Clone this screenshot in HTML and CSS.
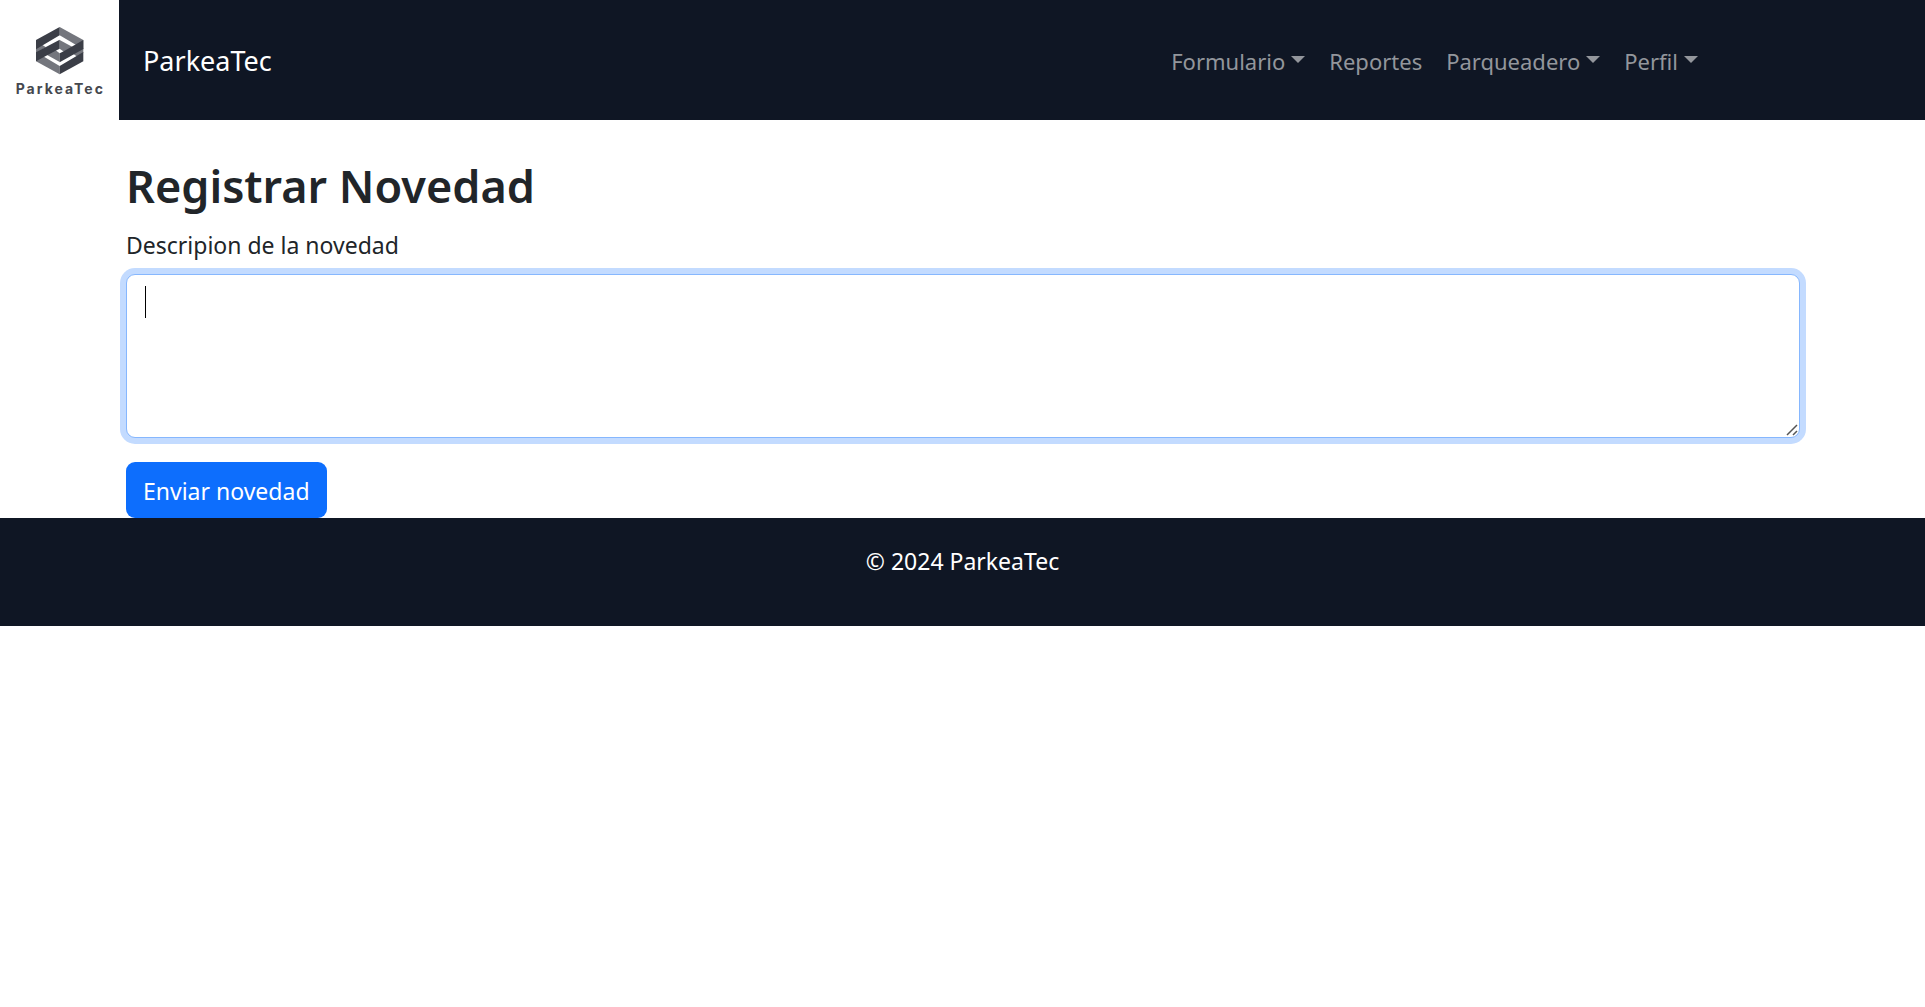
FILE: index.html
```html
<!DOCTYPE html>
<html lang="es">
<head>
<meta charset="utf-8">
<meta name="viewport" content="width=device-width, initial-scale=1">
<title>ParkeaTec</title>
<link rel="stylesheet" href="styles.css">
</head>
<body>
<header class="navbar">
  <svg class="logo" viewBox="0 0 357 360" role="img" aria-label="ParkeaTec">
    <g fill="#74767d">
      <path d="M179 81L250 120V148L179 106Z"/>
      <path d="M179 223L108 184V156L179 198Z"/>
      <path d="M179 120L222 143L196 158L179 146Z"/>
      <path d="M179 186L136 162L162 147L179 160Z"/>
      <path d="M108 145L126 134L138 142L108 160Z"/>
      <path d="M250 159L232 170L220 162L250 144Z"/>
    </g>
    <g fill="#3b3e47">
      <path d="M108 120L179 81V106L108 148Z"/>
      <path d="M250 184L179 223V198L250 156Z"/>
      <path d="M250 120V147L179 187V160L194 152Z"/>
      <path d="M108 184V157L179 119V146L164 154Z"/>
    </g>
    <text class="logo-text" x="181" y="282" text-anchor="middle">ParkeaTec</text>
  </svg>
  <a class="brand" href="#">ParkeaTec</a>
  <nav class="links">
    <a class="link dropdown" href="#">Formulario</a>
    <a class="link" href="#">Reportes</a>
    <a class="link dropdown" href="#">Parqueadero</a>
    <a class="link dropdown" href="#">Perfil</a>
  </nav>
</header>
<main class="container">
  <h1 class="title">Registrar Novedad</h1>
  <form class="form">
    <label class="label" for="descripcion">Descripion de la novedad</label>
    <div class="field">
      <textarea class="textarea" id="descripcion" rows="4" autofocus></textarea>
      <span class="cursor"></span>
      <svg class="grip" viewBox="0 0 12 12" aria-hidden="true">
        <path d="M1 11L11 1M7 11L11 7" stroke="#555" stroke-width="1.5"/>
      </svg>
    </div>
    <button class="button" type="submit">Enviar novedad</button>
  </form>
</main>
<footer class="footer">
  <p class="copyright">© 2024 ParkeaTec</p>
</footer>
</body>
</html>
```
FILE: styles.css
```css
* {
  box-sizing: border-box;
}

body {
  margin: 0;
  background: #fff;
  color: #212529;
  font-family: "Segoe UI", "Noto Sans", sans-serif;
  font-size: 23px;
  line-height: 36px;
}

.navbar {
  display: flex;
  align-items: center;
  padding-right: 227px;
  background: #0f1624;
}

.logo {
  display: block;
  width: 119px;
  height: 120px;
  background: #fff;
}

.logo-text {
  fill: #45484e;
  font-family: Inter, sans-serif;
  font-size: 42px;
  font-weight: 700;
  letter-spacing: 6px;
}

.brand {
  margin-left: 24px;
  padding-top: 2px;
  color: #fff;
  font-size: 27px;
  text-decoration: none;
}

.links {
  display: flex;
  gap: 24px;
  margin-left: auto;
  padding-top: 2px;
}

.link {
  display: flex;
  align-items: center;
  color: #93969c;
  font-size: 22px;
  text-decoration: none;
}

.dropdown::after {
  content: "";
  margin: 0 0 4px 6px;
  border-top: 7px solid;
  border-right: 7px solid transparent;
  border-left: 7px solid transparent;
}

.container {
  padding: 36px 125px 0 126px;
}

.title {
  margin: 0 0 11px;
  font-size: 45px;
  font-weight: 600;
  line-height: 60px;
}

.form {
  display: flex;
  flex-direction: column;
  align-items: flex-start;
}

.label {
  margin-bottom: 11px;
}

.field {
  position: relative;
  width: 100%;
  margin-bottom: 24px;
}

.textarea {
  display: block;
  width: 100%;
  height: 164px;
  padding: 9px 18px;
  border: 1px solid #86b7fe;
  border-radius: 9px;
  outline: 0;
  box-shadow: 0 0 0 6px #c3dbff;
  background: #fff;
  color: inherit;
  font: inherit;
  caret-color: transparent;
  resize: vertical;
}

.textarea::-webkit-resizer {
  background: transparent;
}

.cursor {
  position: absolute;
  top: 12px;
  left: 19px;
  width: 1px;
  height: 32px;
  background: #000;
  pointer-events: none;
}

.grip {
  position: absolute;
  right: 2px;
  bottom: 2px;
  width: 12px;
  height: 12px;
  pointer-events: none;
}

.button {
  padding: 11px 17px 9px;
  border: 0;
  border-radius: 9px;
  background: #0d6efd;
  color: #fff;
  font: inherit;
}

.footer {
  padding: 25px 24px 47px;
  background: #0f1624;
  color: #fff;
  text-align: center;
}

.copyright {
  margin: 0;
}
```
